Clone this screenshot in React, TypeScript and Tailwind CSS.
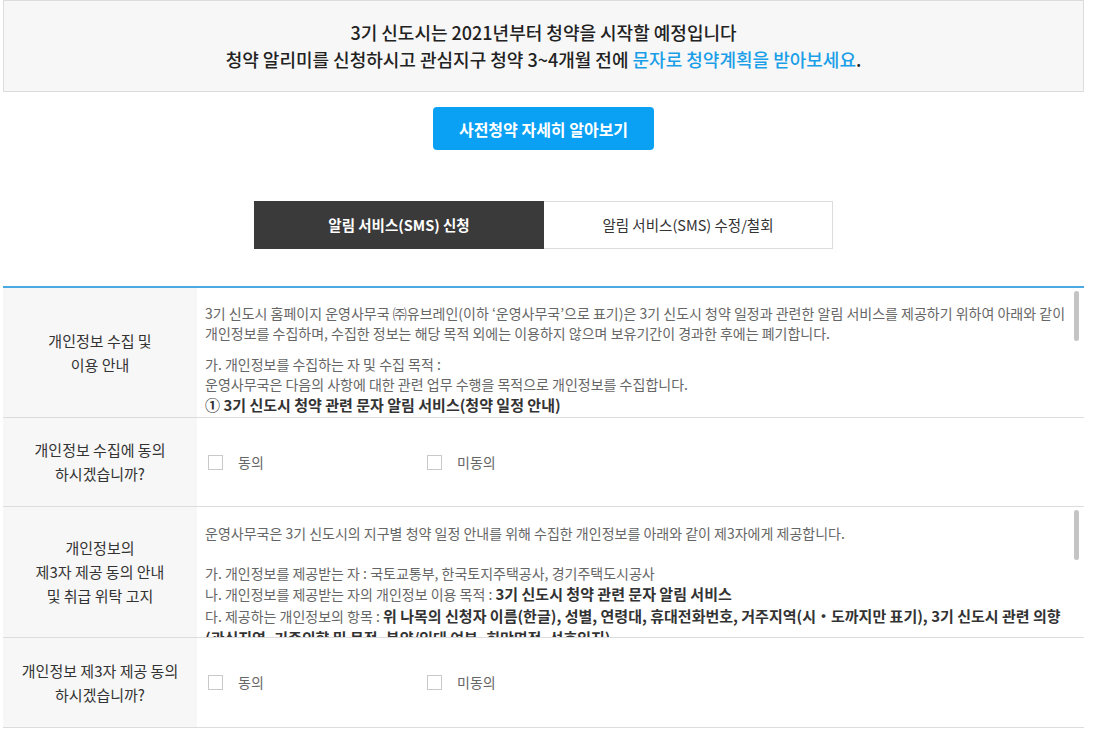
import React from "react";

const FONT = { fontFamily: '"Noto Sans CJK KR", "Noto Sans", sans-serif' };

function Check({ label }: { label: string }) {
  return (
    <label className="flex w-[219px] items-center gap-[15px]">
      <span className="block h-[15px] w-[15px] border border-[#c9c9c9] bg-white" />
      <span className="text-[14px] text-[#666]">{label}</span>
    </label>
  );
}

function Label({ children }: { children: React.ReactNode }) {
  return (
    <div className="flex items-center justify-center bg-[#f7f7f7] text-center text-[15px] leading-[24px] text-[#333] break-keep">
      <div>{children}</div>
    </div>
  );
}

function Thumb() {
  return <div className="absolute right-[5px] top-[3px] h-[50px] w-[5px] rounded-[3px] bg-[#c4c4c4]" />;
}

export default function App() {
  return (
    <div className="min-h-[740px] w-[1108px] bg-white" style={FONT}>
      <div className="ml-[3px] w-[1081px]">
        <div className="flex h-[92px] flex-col items-center justify-center border border-[#dcdcdc] bg-[#f7f7f7] text-[18px] font-medium leading-[27px] text-[#222]">
          <p>3기 신도시는 2021년부터 청약을 시작할 예정입니다</p>
          <p>
            청약 알리미를 신청하시고 관심지구 청약 3~4개월 전에{" "}
            <span className="text-[#1a9ee8]">문자로 청약계획을 받아보세요</span>.
          </p>
        </div>

        <div className="mt-[15px] flex justify-center">
          <button className="h-[43px] w-[221px] rounded-[4px] bg-[#0aa1f5] text-[16px] font-bold text-white">
            사전청약 자세히 알아보기
          </button>
        </div>

        <div className="mt-[51px] flex justify-center">
          <div className="flex h-[48px] w-[579px]">
            <div className="flex w-[290px] items-center justify-center bg-[#3a3a3a] text-[14.5px] font-bold text-white">
              알림 서비스(SMS) 신청
            </div>
            <div className="flex flex-1 items-center justify-center border border-l-0 border-[#dcdcdc] text-[14.5px] text-[#333]">
              알림 서비스(SMS) 수정/철회
            </div>
          </div>
        </div>

        <div className="mt-[37px] border-t-2 border-[#4aa9e3]">
          {/* row 1 */}
          <div className="grid h-[130px] grid-cols-[194px_1fr] border-b border-[#dcdcdc]">
            <Label>
              개인정보 수집 및
              <br />
              이용 안내
            </Label>
            <div className="relative overflow-hidden">
              <Thumb />
              <div className="break-keep pl-[8px] pr-[2px] pt-[15px] text-[14px] leading-[20px] text-[#666]">
                <p>
                  3기 신도시 홈페이지 운영사무국 ㈜유브레인(이하 ‘운영사무국’으로 표기)은 3기 신도시 청약 일정과 관련한 알림 서비스를 제공하기 위하여 아래와 같이 개인정보를 수집하며, 수집한 정보는 해당 목적 외에는 이용하지 않으며 보유기간이 경과한 후에는 폐기합니다.
                </p>
                <p className="mt-[11px]">가. 개인정보를 수집하는 자 및 수집 목적 :</p>
                <p>운영사무국은 다음의 사항에 대한 관련 업무 수행을 목적으로 개인정보를 수집합니다.</p>
                <p className="text-[15px] font-bold leading-[21px] text-[#333]">
                  ① 3기 신도시 청약 관련 문자 알림 서비스(청약 일정 안내)
                </p>
                <p>- 각 지구별 청약 일정 및 관련 정보 안내</p>
              </div>
            </div>
          </div>

          {/* row 2 */}
          <div className="grid h-[89px] grid-cols-[194px_1fr] border-b border-[#dcdcdc]">
            <Label>
              개인정보 수집에 동의
              <br />
              하시겠습니까?
            </Label>
            <div className="flex items-center pl-[11px]">
              <Check label="동의" />
              <Check label="미동의" />
            </div>
          </div>

          {/* row 3 */}
          <div className="grid h-[131px] grid-cols-[194px_1fr] border-b border-[#dcdcdc]">
            <Label>
              개인정보의
              <br />
              제3자 제공 동의 안내
              <br />및 취급 위탁 고지
            </Label>
            <div className="relative overflow-hidden">
              <Thumb />
              <div className="break-keep pl-[8px] pr-[2px] pt-[16px] text-[14px] leading-[20px] text-[#666]">
                <p>운영사무국은 3기 신도시의 지구별 청약 일정 안내를 위해 수집한 개인정보를 아래와 같이 제3자에게 제공합니다.</p>
                <p className="mt-[20px]">가. 개인정보를 제공받는 자 : 국토교통부, 한국토지주택공사, 경기주택도시공사</p>
                <p className="leading-[21px]">
                  나. 개인정보를 제공받는 자의 개인정보 이용 목적 :{" "}
                  <b className="text-[15px] text-[#333]">3기 신도시 청약 관련 문자 알림 서비스</b>
                </p>
                <p className="leading-[22px]">
                  다. 제공하는 개인정보의 항목 :{" "}
                  <b className="text-[15px] text-[#333]">
                    위 나목의 신청자 이름(한글), 성별, 연령대, 휴대전화번호, 거주지역(시・도까지만 표기), 3기 신도시 관련 의향 (관심지역, 기존의향 및 목적, 분양/임대 여부, 희망면적, 선호입지)
                  </b>
                </p>
              </div>
            </div>
          </div>

          {/* row 4 */}
          <div className="grid h-[90px] grid-cols-[194px_1fr] border-b border-[#dcdcdc]">
            <Label>
              개인정보 제3자 제공 동의
              <br />
              하시겠습니까?
            </Label>
            <div className="flex items-center pl-[11px]">
              <Check label="동의" />
              <Check label="미동의" />
            </div>
          </div>
        </div>
      </div>
    </div>
  );
}
